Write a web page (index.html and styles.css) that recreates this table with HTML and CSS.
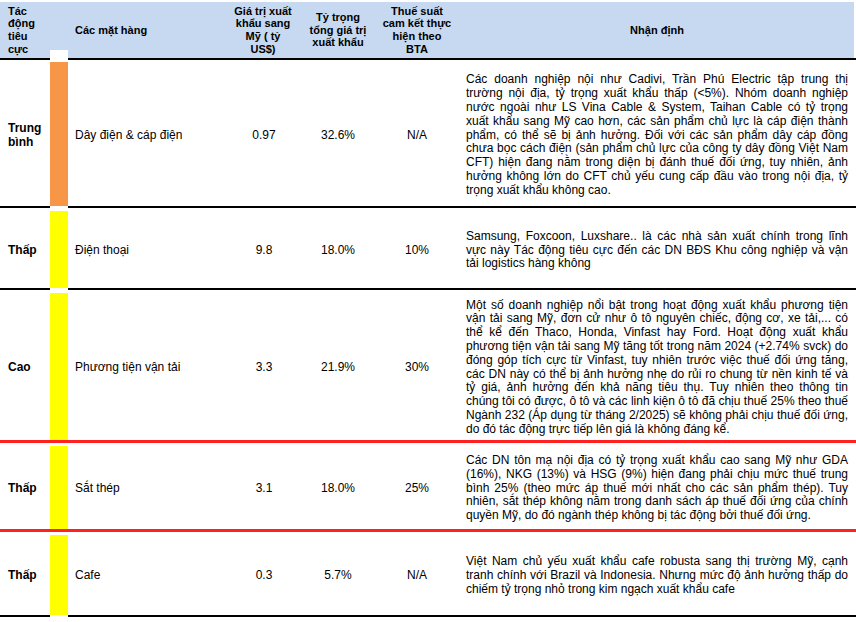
FILE: index.html
```html
<!DOCTYPE html>
<html lang="vi">
<head>
<meta charset="utf-8">
<title>Tác động thuế</title>
<link rel="stylesheet" href="styles.css">
</head>
<body>
<table class="tbl">
  <thead>
    <tr class="hrow">
      <th class="c-level">Tác động tiêu cực</th>
      <th class="c-bar"></th>
      <th class="c-item">Các mặt hàng</th>
      <th class="c-num">Giá trị xuất<br>khẩu sang<br>Mỹ ( tỷ<br>US$)</th>
      <th class="c-pct">Tỷ trọng<br>tổng giá trị<br>xuất khẩu</th>
      <th class="c-tax">Thuế suất<br>cam kết thực<br>hiện theo<br>BTA</th>
      <th class="c-note">Nhận định</th>
    </tr>
  </thead>
  <tbody>
    <tr class="r1">
      <td class="c-level">Trung bình</td>
      <td class="c-bar orange"></td>
      <td class="c-item">Dây điện &amp; cáp điện</td>
      <td class="c-num">0.97</td>
      <td class="c-pct">32.6%</td>
      <td class="c-tax">N/A</td>
      <td class="c-note">Các doanh nghiệp nội như Cadivi, Trần Phú Electric tập trung thị trường nội địa, tỷ trọng xuất khẩu thấp (&lt;5%). Nhóm doanh nghiệp nước ngoài như LS Vina Cable &amp; System, Taihan Cable có tỷ trọng xuất khẩu sang Mỹ cao hơn, các sản phẩm chủ lực là cáp điện thành phẩm, có thể sẽ bị ảnh hưởng. Đối với các sản phẩm dây cáp đồng chưa bọc cách điện (sản phẩm chủ lực của công ty dây đồng Việt Nam CFT) hiện đang nằm trong diện bị đánh thuế đối ứng, tuy nhiên, ảnh hưởng không lớn do CFT chủ yếu cung cấp đầu vào trong nội địa, tỷ trọng xuất khẩu không cao.</td>
    </tr>
    <tr class="r2">
      <td class="c-level">Thấp</td>
      <td class="c-bar yellow"></td>
      <td class="c-item">Điện thoại</td>
      <td class="c-num">9.8</td>
      <td class="c-pct">18.0%</td>
      <td class="c-tax">10%</td>
      <td class="c-note">Samsung, Foxcoon, Luxshare.. là các nhà sản xuất chính trong lĩnh vực này Tác động tiêu cực đến các DN BĐS Khu công nghiệp và vận tải logistics hàng không</td>
    </tr>
    <tr class="r3 red">
      <td class="c-level">Cao</td>
      <td class="c-bar yellow"></td>
      <td class="c-item">Phương tiện vận tải</td>
      <td class="c-num">3.3</td>
      <td class="c-pct">21.9%</td>
      <td class="c-tax">30%</td>
      <td class="c-note">Một số doanh nghiệp nổi bật trong hoạt động xuất khẩu phương tiện vận tải sang Mỹ, đơn cử như ô tô nguyên chiếc, động cơ, xe tải,... có thể kể đến Thaco, Honda, Vinfast hay Ford. Hoạt động xuất khẩu phương tiện vận tải sang Mỹ tăng tốt trong năm 2024 (+2.74% svck) do đóng góp tích cực từ Vinfast, tuy nhiên trước việc thuế đối ứng tăng, các DN này có thể bị ảnh hưởng nhẹ do rủi ro chung từ nền kinh tế và tỷ giá, ảnh hưởng đến khả năng tiêu thụ. Tuy nhiên theo thông tin chúng tôi có được, ô tô và các linh kiện ô tô đã chịu thuế 25% theo thuế Ngành 232 (Áp dụng từ tháng 2/2025) sẽ không phải chịu thuế đối ứng, do đó tác động trực tiếp lên giá là không đáng kể.</td>
    </tr>
    <tr class="r4 red">
      <td class="c-level">Thấp</td>
      <td class="c-bar yellow"></td>
      <td class="c-item">Sắt thép</td>
      <td class="c-num">3.1</td>
      <td class="c-pct">18.0%</td>
      <td class="c-tax">25%</td>
      <td class="c-note">Các DN tôn mạ nội địa có tỷ trọng xuất khẩu cao sang Mỹ như GDA (16%), NKG (13%) và HSG (9%) hiện đang phải chịu mức thuế trung bình 25% (theo mức áp thuế mới nhất cho các sản phẩm thép). Tuy nhiên, sắt thép không nằm trong danh sách áp thuế đối ứng của chính quyền Mỹ, do đó ngành thép không bị tác động bởi thuế đối ứng.</td>
    </tr>
    <tr class="r5">
      <td class="c-level">Thấp</td>
      <td class="c-bar yellow"></td>
      <td class="c-item">Cafe</td>
      <td class="c-num">0.3</td>
      <td class="c-pct">5.7%</td>
      <td class="c-tax">N/A</td>
      <td class="c-note">Việt Nam chủ yếu xuất khẩu cafe robusta sang thị trường Mỹ, cạnh tranh chính với Brazil và Indonesia. Nhưng mức độ ảnh hưởng thấp do chiếm tỷ trọng nhỏ trong kim ngạch xuất khẩu cafe</td>
    </tr>
  </tbody>
</table>
</body>
</html>
```
FILE: styles.css
```css
html, body {
  margin: 0;
  padding: 0;
  background: #ffffff;
}

body {
  font-family: "Liberation Sans", Arial, sans-serif;
  color: #000;
}

.tbl {
  margin-top: 2px;
  width: 856px;
  border-collapse: separate;
  border-spacing: 0;
  table-layout: fixed;
}

.tbl th,
.tbl td {
  padding: 0;
  vertical-align: middle;
  border-bottom: 2px solid #000;
}

/* header */
.hrow {
  height: 58px;
}

.tbl th {
  background: #c6d9f0;
  font-size: 11px;
  line-height: 12.7px;
  font-weight: bold;
  text-align: center;
}

.tbl th.c-level,
.tbl th.c-item {
  text-align: left;
}

.tbl th.c-bar {
  background: linear-gradient(#c6d9f0 0 48px, #ffffff 48px);
  border-bottom-color: #ffffff;
}

.tbl th.c-note {
  padding-right: 56px;
  background: linear-gradient(90deg, #c6d9f0 0 398px, #ffffff 398px);
}

/* columns */
.c-level {
  width: 42px;
  padding-left: 8px !important;
  font-weight: bold;
  font-size: 12px;
  line-height: 13.5px;
}

.c-bar {
  width: 18px;
}

.c-item {
  width: 153px;
  padding-left: 7px !important;
}

.c-num {
  width: 70px;
  text-align: center;
}

.c-pct {
  width: 80px;
  text-align: center;
}

.c-tax {
  width: 78px;
  text-align: center;
}

.c-note {
  padding-left: 10px !important;
  padding-right: 8px !important;
}

/* body cells */
.tbl td {
  font-size: 12px;
  line-height: 13.8px;
  padding-top: 5px;
}

.tbl td.c-note {
  text-align: justify;
}

.tbl td.c-num {
  padding-left: 2px;
}

.tbl td.c-bar {
  padding-top: 0;
  border-bottom-color: #ffffff;
}

.orange {
  background: linear-gradient(#ffffff 0 2px, #f79646 2px);
}

.yellow {
  background: linear-gradient(#ffffff 0 3px, #ffff00 3px);
}

.r1 { height: 148px; }
.r2 { height: 82px; }
.r3 { height: 153px; }
.r4 { height: 89px; }
.r5 { height: 85px; }

.tbl tr.red td,
.tbl tr.red td.c-bar {
  border-bottom: 3px solid #ff2020;
}
```
